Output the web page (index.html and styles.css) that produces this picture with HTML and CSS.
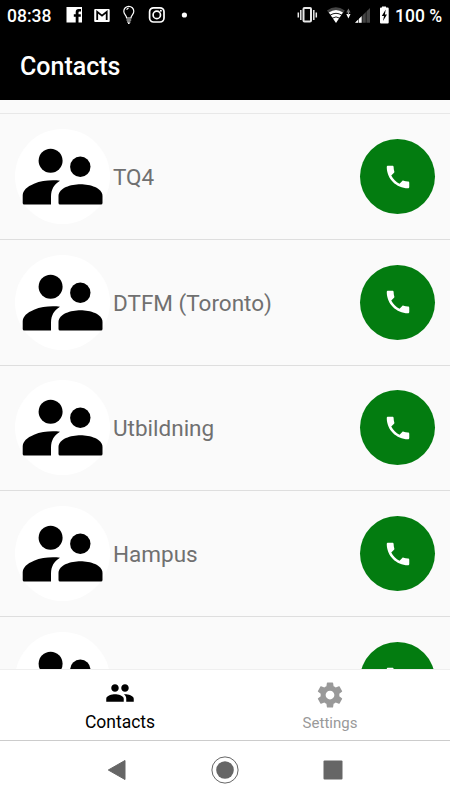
FILE: index.html
```html
<!DOCTYPE html>
<html lang="en">
<head>
<meta charset="utf-8">
<title>Contacts</title>
<link rel="stylesheet" href="styles.css">
</head>
<body>
<svg class="defs" aria-hidden="true">
  <symbol id="group" viewBox="0 0 95 95">
    <circle cx="35.6" cy="31.7" r="12"/>
    <circle cx="65.3" cy="37.7" r="10.2"/>
    <path d="M9.200 75.500H36V67.500C36 60.500 39 55.500 45 51.800C37 50.700 27 51.500 19 54.700C12 57.600 7.700 61.500 7.700 66.500V74Q7.700 75.500 9.200 75.500Z"/>
    <path d="M45 75.500H86Q87.500 75.500 87.500 74V67C87.500 59 75 55.300 65.500 55.300C56 55.300 43.500 59 43.500 67V74Q43.500 75.500 45 75.500Z"/>
  </symbol>
  <symbol id="phone" viewBox="0 0 24 24">
    <path d="M6.620 10.790c1.440 2.830 3.760 5.140 6.590 6.590l2.200-2.200c.27-.27.67-.36 1.020-.24 1.120.37 2.330.57 3.570.57.55 0 1 .45 1 1V20c0 .55-.45 1-1 1-9.390 0-17-7.610-17-17 0-.55.45-1 1-1h3.500c.55 0 1 .45 1 1 0 1.250.2 2.450.57 3.570.11.35.03.74-.25 1.020l-2.200 2.200z"/>
  </symbol>
</svg>
<div class="screen">
  <header class="top">
    <div class="status">
      <span class="clock">08:38</span>
      <svg class="notices" width="130" height="20" viewBox="0 0 130 20">
        <path fill="#fff" d="M0.500 2h15.500v15.500h-3.500v-5.800h2.300v-2.500h-2.300V7.500q0-1 1-1h1.500V4h-2.300q-3 0-3 3v2.200H7.800v2.500h1.900v5.800H.5z"/>
        <rect x="28.200" y="4" width="15.500" height="13" rx="1" fill="#fff"/>
        <path d="M31.200 15V6.800L36 10.600L40.700 6.800V15" fill="none" stroke="#000" stroke-width="1.800"/>
        <g fill="none" stroke="#fff" stroke-width="1.200"><path d="M60.600 13C60.600 10 57.800 9.500 57.800 6.300A5 5 0 0 1 67.800 6.300C67.800 9.500 65 10 65 13ZM60.500 15H65.200M61 17H64.500M62 18.300H63.600M60.700 4.800q.5-1.500 2-1.800"/></g>
        <g fill="none" stroke="#fff" stroke-width="1.700"><rect x="83.600" y="2.800" width="14.400" height="14.200" rx="4"/><circle cx="90.800" cy="9.900" r="3.700"/></g>
        <circle cx="94.900" cy="5.800" r="1" fill="#fff"/>
        <circle cx="118.400" cy="10" r="2.600" fill="#fff"/>
      </svg>
      <svg class="signals" width="94" height="20" viewBox="0 0 94 20">
        <g fill="none" stroke="#e8e8e8" stroke-width="1.500"><rect x="6.500" y="3" width="7.500" height="13.500" rx="1" stroke-width="2"/><path d="M3.800 5v10M1.300 7.500v5M16.800 5v10M19.300 7.500v5"/></g>
        <path d="M30 5.500Q38.800-1 47.800 5.500L46 8Q39 3 31.800 8Z" fill="#444"/>
        <path d="M31.800 7.500Q39 2.500 46 7.500L39 18Z" fill="#fff"/>
        <path d="M33 10.300Q39 6.300 45 10.300M35 13.300Q39 10.500 43 13.300" fill="none" stroke="#000" stroke-width=".9"/>
        <path d="M49.300 7.500L51.400 3.500L53.500 7.500Z" fill="#777"/><path d="M49.300 9H53.500L51.400 13.500Z" fill="#fff"/><path d="M51.400 7v3" stroke="#aaa"/>
        <path d="M58 17.800L73 3V17.800Z" fill="#444"/><path d="M58 17.800L64.800 11V17.800Z" fill="#fff"/>
        <path d="M61.500 13v5M65.200 8v10M69.200 5v13" stroke="#000" stroke-width=".6"/>
        <path d="M85 2.500V1.500h4v1h1.700q1 0 1 1V17.500q0 1-1 1H84q-1 0-1-1V3.500q0-1 1-1z" fill="#fff"/>
        <path d="M88.700 4.500L84.800 11H87L86 16L90 9.500H87.900Z" fill="#000"/>
      </svg>
      <span class="battery">100 %</span>
    </div>
    <h1 class="title">Contacts</h1>
  </header>
  <main class="list">
    <div class="row"><span class="avatar"><svg><use href="#group"/></svg></span><span class="name">TQ4</span><button class="call" aria-label="Call"><svg><use href="#phone"/></svg></button></div>
    <div class="row"><span class="avatar"><svg><use href="#group"/></svg></span><span class="name">DTFM (Toronto)</span><button class="call" aria-label="Call"><svg><use href="#phone"/></svg></button></div>
    <div class="row"><span class="avatar"><svg><use href="#group"/></svg></span><span class="name">Utbildning</span><button class="call" aria-label="Call"><svg><use href="#phone"/></svg></button></div>
    <div class="row"><span class="avatar"><svg><use href="#group"/></svg></span><span class="name">Hampus</span><button class="call" aria-label="Call"><svg><use href="#phone"/></svg></button></div>
    <div class="row"><span class="avatar"><svg><use href="#group"/></svg></span><span class="name"></span><button class="call" aria-label="Call"><svg><use href="#phone"/></svg></button></div>
  </main>
  <nav class="tabs">
    <a class="tab active">
      <svg viewBox="0 0 24 24"><path d="M16 11c1.660 0 2.990-1.340 2.990-3S17.660 5 16 5s-3 1.340-3 3 1.340 3 3 3zm-8 0c1.660 0 2.990-1.340 2.990-3S9.660 5 8 5 5 6.340 5 8s1.340 3 3 3zm0 2c-2.330 0-7 1.170-7 3.500V19h14v-2.500c0-2.330-4.670-3.500-7-3.500zm8 0c-.29 0-.62.020-.97.050 1.160.84 1.970 1.970 1.970 3.450V19h6v-2.500c0-2.330-4.670-3.500-7-3.500z"/></svg>
      <span>Contacts</span>
    </a>
    <a class="tab">
      <svg viewBox="0 0 24 24"><path d="M19.430 12.980c.04-.32.070-.64.070-.98s-.03-.66-.07-.98l2.110-1.650c.19-.15.24-.42.120-.64l-2-3.460c-.12-.22-.39-.3-.61-.22l-2.490 1c-.52-.4-1.080-.73-1.690-.98l-.38-2.650C14.460 2.180 14.250 2 14 2h-4c-.25 0-.46.18-.49.42l-.38 2.650c-.61.25-1.170.59-1.690.98l-2.490-1c-.23-.09-.49 0-.61.22l-2 3.460c-.13.22-.07.49.12.64l2.110 1.650c-.04.32-.07.65-.07.98s.03.66.07.98l-2.110 1.650c-.19.15-.24.42-.12.64l2 3.460c.12.22.39.3.61.22l2.490-1c.52.4 1.080.73 1.690.98l.38 2.650c.03.24.24.42.49.42h4c.25 0 .46-.18.49-.42l.38-2.650c.61-.25 1.170-.59 1.690-.98l2.490 1c.23.09.49 0 .61-.22l2-3.460c.12-.22.070-.49-.12-.64l-2.110-1.650zM12 15.500c-1.930 0-3.500-1.570-3.500-3.500s1.570-3.500 3.500-3.500 3.500 1.570 3.500 3.500-1.570 3.500-3.500 3.500z"/></svg>
      <span>Settings</span>
    </a>
  </nav>
  <footer class="system">
    <svg width="28" height="28" viewBox="0 0 28 28"><path d="M5.300 14L22 4.500V23.500Z" fill="#666" stroke="#666" stroke-linejoin="round"/></svg>
    <svg width="28" height="28" viewBox="0 0 28 28"><circle cx="14" cy="14" r="13.100" fill="none" stroke="#666"/><circle cx="14" cy="14" r="8.800" fill="#666"/></svg>
    <svg width="28" height="28" viewBox="0 0 28 28"><rect x="4.500" y="4.500" width="19" height="19" rx="1" fill="#666"/></svg>
  </footer>
</div>
</body>
</html>
```
FILE: styles.css
```css
* {
  box-sizing: border-box;
}

body {
  margin: 0;
  font-family: Roboto, "Liberation Sans", sans-serif;
}

.defs {
  display: none;
}

.screen {
  display: flex;
  flex-direction: column;
  width: 450px;
  height: 800px;
  overflow: hidden;
  background: #fafafa;
}

.top {
  flex: none;
  height: 100px;
  background: #000;
  color: #fff;
}

.status {
  display: flex;
  align-items: center;
  height: 31px;
  padding: 0 7px 0 7px;
  font-size: 17.5px;
  font-weight: 500;
  white-space: nowrap;
}

.clock {
  width: 59px;
}

.signals {
  margin-left: auto;
}

.notices,
.signals {
  flex: none;
  margin-top: -1px;
}

.battery {
  width: 48px;
  margin-left: 4px;
}

.title {
  margin: 0;
  padding: 21px 20px 0;
  font-size: 25px;
  line-height: 30px;
  font-weight: 500;
}

.list {
  flex: none;
  height: 570px;
  padding-top: 13.4px;
  overflow: hidden;
  border-bottom: 1px solid #efefef;
}

.row {
  display: flex;
  align-items: center;
  height: 125.6px;
  padding: 0 15px;
  border-bottom: 1px solid #dedede;
}

.row:first-child {
  height: 126.7px;
  border-top: 1px solid #e8e8e8;
}

.avatar {
  flex: none;
  width: 95px;
  height: 95px;
  border-radius: 50%;
  background: #fff;
}

.avatar svg {
  display: block;
  width: 95px;
  height: 95px;
}

.name {
  flex: 1;
  padding: 1px 0 0 3px;
  color: #707070;
  font-size: 22.5px;
}

.call {
  display: flex;
  align-items: center;
  justify-content: center;
  width: 75px;
  height: 75px;
  padding: 0;
  border: 0;
  border-radius: 50%;
  background: #037c10;
}

.call svg {
  width: 30px;
  height: 30px;
  fill: #fff;
}

.tabs {
  display: flex;
  flex: none;
  height: 71px;
  padding: 0 15px;
  background: #fff;
  border-bottom: 1px solid #ccc;
}

.tab {
  display: flex;
  flex: 1;
  flex-direction: column;
  align-items: center;
  padding-top: 10px;
  color: #999;
  fill: #999;
  font-size: 15px;
  line-height: 20px;
}

.tab svg {
  width: 30px;
  height: 30px;
}

.tab span {
  margin-top: 3px;
}

.active {
  padding-top: 8px;
  color: #000;
  fill: #000;
  font-size: 17.5px;
}

.active svg {
  margin-right: 1px;
}

.active span {
  margin-top: 4px;
}

.system {
  display: flex;
  flex: 1;
  align-items: center;
  justify-content: space-between;
  padding: 0 103.500px 1px 102.500px;
  background: #fff;
}
```
